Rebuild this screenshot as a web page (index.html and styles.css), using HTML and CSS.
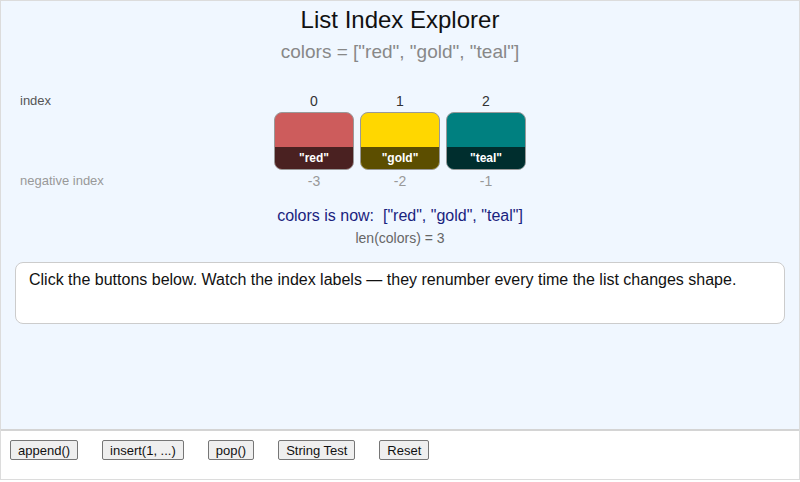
FILE: index.html
```html
<!DOCTYPE html>
<html lang="en">
<head>
	<meta charset="UTF-8">
	<title>List Index Explorer</title>
	<link rel="stylesheet" href="styles.css">
</head>
<body>
	<main class="app">
		<section class="stage">
			<h1 class="title">List Index Explorer</h1>
			<div class="code">colors = ["red", "gold", "teal"]</div>

			<div class="row row-index">
				<span class="label">index</span>
				<div class="cells">
					<span class="cell">0</span>
					<span class="cell">1</span>
					<span class="cell">2</span>
				</div>
			</div>
			<div class="row row-boxes">
				<span class="label"></span>
				<div class="cells">
					<div class="box red"><span class="name">"red"</span></div>
					<div class="box gold"><span class="name">"gold"</span></div>
					<div class="box teal"><span class="name">"teal"</span></div>
				</div>
			</div>
			<div class="row row-neg">
				<span class="label">negative index</span>
				<div class="cells">
					<span class="cell">-3</span>
					<span class="cell">-2</span>
					<span class="cell">-1</span>
				</div>
			</div>

			<div class="status">colors is now:&nbsp; ["red", "gold", "teal"]</div>
			<div class="len">len(colors) = 3</div>

			<div class="message">Click the buttons below. Watch the index labels — they renumber every time the list changes shape.</div>
		</section>
		<footer class="controls">
			<button>append()</button>
			<button>insert(1, ...)</button>
			<button>pop()</button>
			<button>String Test</button>
			<button>Reset</button>
		</footer>
	</main>
</body>
</html>
```

FILE: styles.css
```css
body {
	margin: 0;
	font-family: "Liberation Sans", Arial, sans-serif;
}
main.app {
	border: 1px solid #dcdcdc;
	height: 478px;
	width: 798px;
	display: flex;
	flex-direction: column;
}
/* stage */
section.stage {
	background-color: #f0f7ff;
	border-bottom: 2px solid #d4d4d4;
	flex: 1;
	padding-top: 5px;
}
h1.title {
	color: #111;
	font-size: 24px;
	font-weight: normal;
	line-height: 28px;
	margin: 0;
	text-align: center;
}
div.code {
	color: #888;
	font-size: 19px;
	line-height: 22px;
	margin-top: 7px;
	text-align: center;
}
div.row {
	display: grid;
	grid-template-columns: 1fr auto 1fr;
	align-items: center;
}
div.row span.label {
	color: #555;
	font-size: 13px;
	padding-left: 19px;
}
div.row .cells {
	display: flex;
	gap: 6px;
}
div.row span.cell {
	text-align: center;
	width: 80px;
}
div.row-index {
	color: #333;
	font-size: 14px;
	line-height: 16px;
	margin-top: 30px;
}
div.row-boxes {
	margin-top: 3px;
}
div.row-neg {
	color: #999;
	font-size: 14px;
	line-height: 16px;
	margin-top: 3px;
}
div.row-neg span.label { color: #999; }

div.box {
	border: 1px solid #999;
	border-radius: 8px;
	box-sizing: border-box;
	display: flex;
	flex-direction: column;
	justify-content: flex-end;
	height: 58px;
	overflow: hidden;
	width: 80px;
}
div.box.red  { background-color: #cd5c5c; }
div.box.gold { background-color: #ffd700; }
div.box.teal { background-color: #008080; }
div.box span.name {
	background-color: rgba(0,0,0,.64);
	color: #fff;
	font-size: 12px;
	font-weight: bold;
	line-height: 22px;
	text-align: center;
}
div.status {
	color: #1a237e;
	font-size: 16px;
	line-height: 18px;
	margin-top: 18px;
	text-align: center;
}
div.len {
	color: #666;
	font-size: 14px;
	line-height: 16px;
	margin-top: 5px;
	text-align: center;
}
div.message {
	background-color: #fff;
	border: 1px solid #ccc;
	border-radius: 8px;
	color: #111;
	font-size: 16px;
	height: 44px;
	line-height: 18px;
	margin: 16px 14px 0 14px;
	padding: 8px 13px;
}
/* controls */
footer.controls {
	background-color: #fff;
	display: flex;
	gap: 24px;
	height: 48px;
	padding: 9px 9px 0;
	box-sizing: border-box;
	align-items: flex-start;
}
footer.controls button {
	background-color: #efefef;
	border: 1px solid #767676;
	border-radius: 2px;
	color: #111;
	font: 13px "Liberation Sans", Arial, sans-serif;
	height: 20px;
	padding: 0 7px;
}
```
